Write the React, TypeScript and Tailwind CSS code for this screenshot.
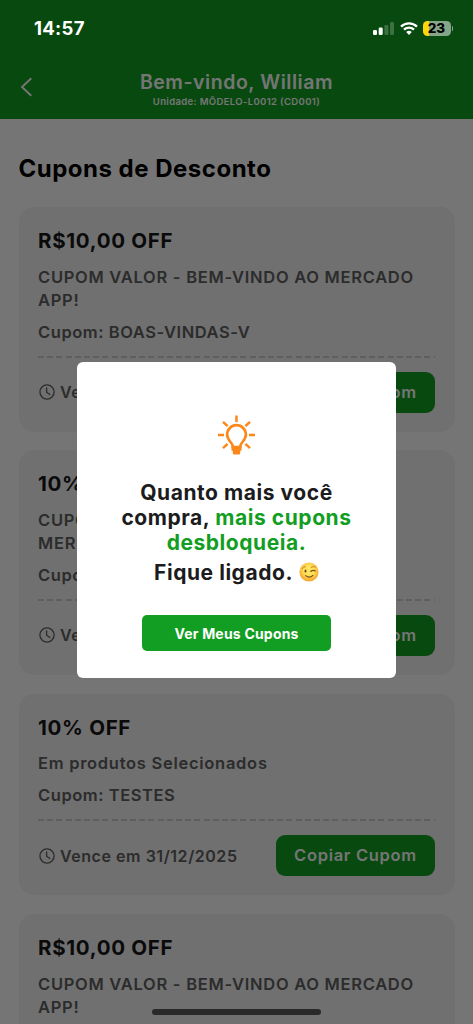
interface Coupon {
  title: string;
  description: string[];
  code: string;
  expires: string;
}

const COUPONS: Coupon[] = [
  {
    title: "R$10,00 OFF",
    description: ["CUPOM VALOR - BEM-VINDO AO MERCADO", "APP!"],
    code: "BOAS-VINDAS-V",
    expires: "31/12/2025",
  },
  {
    title: "10% OFF",
    description: ["CUPOM PERCENTUAL - BEM-VINDO AO", "MERCADO APP!"],
    code: "BOAS-VINDAS-P",
    expires: "31/12/2025",
  },
  {
    title: "10% OFF",
    description: ["Em produtos Selecionados"],
    code: "TESTES",
    expires: "31/12/2025",
  },
  {
    title: "R$10,00 OFF",
    description: ["CUPOM VALOR - BEM-VINDO AO MERCADO", "APP!"],
    code: "BOAS-VINDAS-V",
    expires: "31/12/2025",
  },
];

function BackIcon() {
  return (
    <svg className="ml-5 mt-2 h-5 w-3" viewBox="0 0 12 20" fill="none" stroke="currentColor" strokeWidth="1.9">
      <path d="M11.3 1.2L2 10l9.3 8.8" />
    </svg>
  );
}

function ClockIcon() {
  return (
    <svg className="size-4 shrink-0" viewBox="0 0 16 16" fill="none" stroke="#606060" strokeWidth="1.3" strokeLinecap="round" strokeLinejoin="round">
      <circle cx="8" cy="8" r="7.1" />
      <path d="M7.6 3.8v4.5l3.3 2.2" />
    </svg>
  );
}

function BulbIcon() {
  return (
    <svg className="h-10 w-[39px]" viewBox="0 0 39 40" fill="none" stroke="#fb881b" strokeWidth="2.5">
      <path d="M19.5 .5v6.5M1 20h6M32 20h6M6 6.8l4.6 4.4M33 6.8l-4.6 4.4M6 33.2l4.6-4.4M33 33.2l-4.6-4.4" />
      <path d="M15.6 32.2v-1.4c0-3-5.5-5.5-5.5-11.2a9.4 9.4 0 0 1 18.8 0c0 5.7-5.5 8.2-5.5 11.2v1.4z" strokeWidth="2.7" strokeLinejoin="round" />
      <path d="M14.5 31.5h10v4.2h-1.3v2.3q0 1.5-1.2 1.5h-5q-1.2 0-1.2-1.5v-2.3h-1.3z" fill="#fb881b" stroke="none" />
    </svg>
  );
}

function WinkIcon() {
  return (
    <svg className="-mt-0.5 size-5" viewBox="0 0 20 20" fill="none" strokeLinecap="round">
      <defs>
        <radialGradient id="face" cx="50%" cy="42%" r="55%">
          <stop offset="0.45" stopColor="#ffe35c" />
          <stop offset="1" stopColor="#f5a72c" />
        </radialGradient>
      </defs>
      <circle cx="10" cy="10" r="9.6" fill="url(#face)" />
      <path d="M3.3 6.6q1-1.8 3-1.9M12.3 5.2q2-1.3 3.9-.2" stroke="#b5731c" strokeWidth="0.9" />
      <ellipse cx="6.5" cy="9" rx="1" ry="1.5" fill="#68401b" />
      <path d="M11.7 9.5q2.4-2 4.7-.5M6.7 13.6q3.8 3.2 7.2-.3" stroke="#794a1d" strokeWidth="1.1" />
    </svg>
  );
}

function StatusBar() {
  return (
    <div className="flex h-[57px] items-center justify-between pl-[34px] pr-5 text-white">
      <span className="pt-px text-[18.5px] font-bold tracking-[0.3px]">14:57</span>
      <div className="flex items-center">
        <svg className="h-[13px] w-[21px]" viewBox="0 0 21 13" fill="currentColor">
          <rect x="0" y="8" width="4" height="5" rx="1.2" />
          <rect x="5.7" y="5.5" width="4" height="7.5" rx="1.2" />
          <rect x="11.4" y="3" width="4" height="10" rx="1.2" opacity="0.22" />
          <rect x="17" y="0" width="4" height="13" rx="1.2" opacity="0.22" />
        </svg>
        <svg className="ml-1.5 h-[13px] w-[18px]" viewBox="0 0 18 13" fill="none" stroke="currentColor">
          <path d="M1 4.6a11.5 11.5 0 0 1 16 0M4 7.7a7.2 7.2 0 0 1 10 0" strokeWidth="2.3" />
          <path d="M6.2 10.1a4.1 4.1 0 0 1 5.6 0L9 13z" fill="currentColor" stroke="none" />
        </svg>
        <div className="ml-[5px] flex h-[15px] w-7 items-center justify-center rounded-[4.5px] bg-[linear-gradient(90deg,#ffd60a_0_23%,#87a589_23%)]">
          <span className="pt-px text-[13.5px] font-extrabold leading-none text-black">23</span>
        </div>
        <span className="ml-px h-[5px] w-[1.5px] rounded-r bg-[#87a589]" />
      </div>
    </div>
  );
}

function CouponCard({ coupon }: { coupon: Coupon }) {
  return (
    <article className="rounded-[15px] bg-[#f3f3f3] px-[19.5px] pb-[19px] pt-5 font-semibold text-[#606060]">
      <h2 className="text-[20.5px] font-bold leading-7 tracking-[0.7px] text-[#171717]">{coupon.title}</h2>
      <div className="mt-[10.5px] whitespace-nowrap text-[16.5px] leading-[23px] tracking-[0.72px]">
        {coupon.description.map((line) => (
          <p key={line}>{line}</p>
        ))}
      </div>
      <p className="mt-[9px] text-[16.5px] leading-[23px] tracking-[0.56px]">Cupom: {coupon.code}</p>
      <div className="mt-3 h-0.5 bg-[repeating-linear-gradient(90deg,#cfcfcf_0_6px,transparent_6px_9.2px)]" />
      <div className="mt-[14px] flex items-center justify-between">
        <div className="flex items-center gap-[5.5px] whitespace-nowrap pl-[0.5px] text-[16px] tracking-[0.55px]">
          <ClockIcon />
          <span>Vence em {coupon.expires}</span>
        </div>
        <button className="h-[41px] w-[159px] shrink-0 whitespace-nowrap rounded-[9px] bg-[#10a020] text-[16.5px] tracking-[0.7px] text-white">
          Copiar Cupom
        </button>
      </div>
    </article>
  );
}

function CouponDialog() {
  return (
    <div role="dialog" className="flex h-[316px] w-[319.5px] flex-col items-center rounded-md bg-white pt-[53px] font-bold text-[#1c1c20]">
      <BulbIcon />
      <p className="mt-[25px] whitespace-nowrap text-center text-[21px] leading-[25px] tracking-[0.55px]">
        Quanto mais você
        <br />
        compra, <span className="text-[#129e22]">mais cupons</span>
        <br />
        <span className="text-[#129e22]">desbloqueia.</span>
      </p>
      <p className="mt-[5px] flex h-[25px] items-center gap-[6px] text-[21px] leading-[25px] tracking-[0.55px]">
        Fique ligado. <WinkIcon />
      </p>
      <button className="mt-[30px] h-9 w-[189px] rounded-[5px] bg-[#129e22] text-[14px] tracking-[0.2px] text-white">
        Ver Meus Cupons
      </button>
    </div>
  );
}

export default function App() {
  return (
    <div className="relative h-[1024px] w-[473px] overflow-hidden bg-white font-['Inter',sans-serif]">
      <header className="h-[119px] bg-[#10a020] pt-14 font-semibold text-white">
        <div className="grid grid-cols-[60px_1fr_60px] items-center">
          <BackIcon />
          <div className="whitespace-nowrap pt-[14px] text-center">
            <h1 className="text-[19.5px] leading-6 tracking-[0.55px]">Bem-vindo, William</h1>
            <p className="mt-px text-[9.5px] leading-[14px] tracking-[0.36px]">Unidade: MÔDELO-L0012 (CD001)</p>
          </div>
        </div>
      </header>
      <main className="px-[18.5px] pt-[34px]">
        <h1 className="text-[24px] font-bold leading-8 tracking-[0.5px] text-black">Cupons de Desconto</h1>
        <div className="mt-[22px] flex flex-col gap-[18.9px]">
          {COUPONS.map((coupon, i) => (
            <CouponCard key={i} coupon={coupon} />
          ))}
        </div>
      </main>
      <div className="absolute inset-0 flex items-center justify-center bg-black/54 pt-4">
        <CouponDialog />
      </div>
      <div className="absolute inset-x-0 top-0">
        <StatusBar />
      </div>
      <div className="absolute bottom-[9px] left-[152px] h-1.5 w-[169px] rounded-full bg-[#292929]" />
    </div>
  );
}
